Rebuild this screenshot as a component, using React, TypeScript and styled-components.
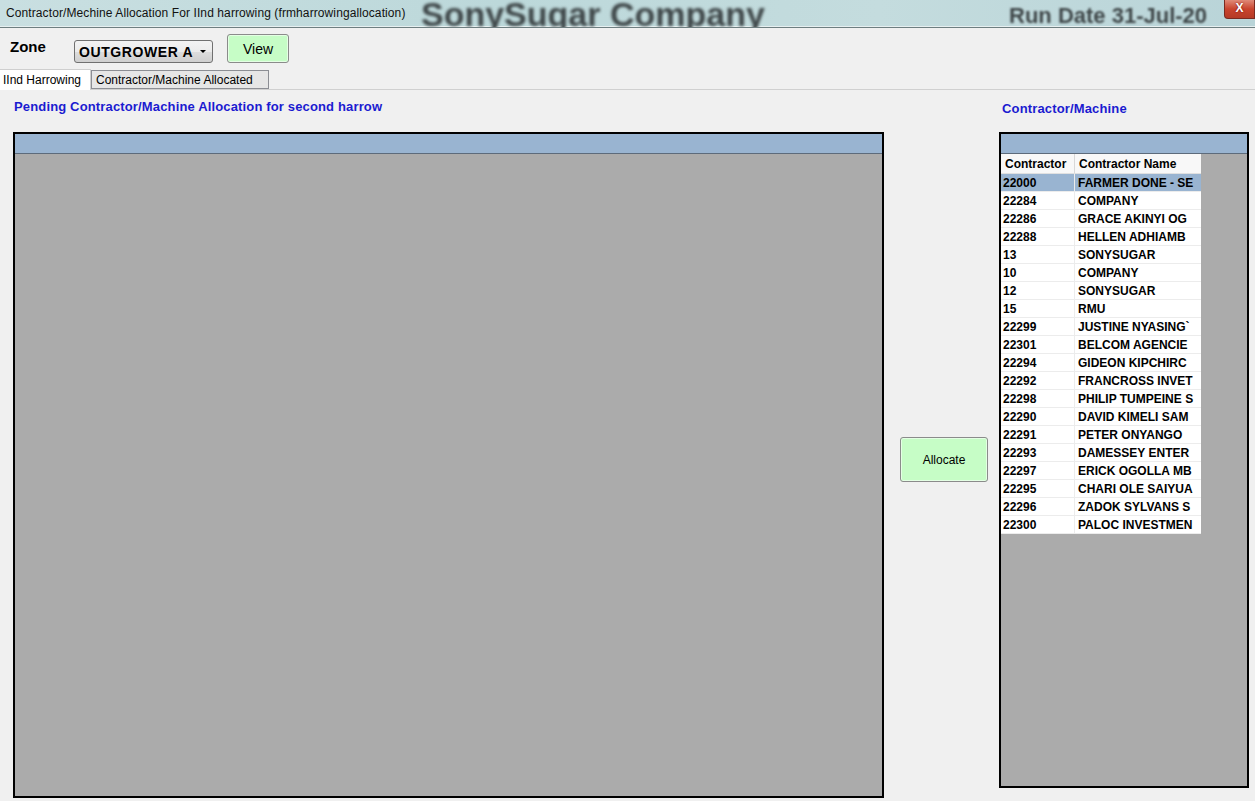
import React from "react";
import styled, { createGlobalStyle } from "styled-components";

const contractors: [string, string][] = [
  ["22000", "FARMER DONE - SE"],
  ["22284", "COMPANY"],
  ["22286", "GRACE AKINYI OG"],
  ["22288", "HELLEN ADHIAMB"],
  ["13", "SONYSUGAR"],
  ["10", "COMPANY"],
  ["12", "SONYSUGAR"],
  ["15", "RMU"],
  ["22299", "JUSTINE NYASING`"],
  ["22301", "BELCOM AGENCIE"],
  ["22294", "GIDEON KIPCHIRC"],
  ["22292", "FRANCROSS INVET"],
  ["22298", "PHILIP TUMPEINE S"],
  ["22290", "DAVID KIMELI SAM"],
  ["22291", "PETER ONYANGO"],
  ["22293", "DAMESSEY ENTER"],
  ["22297", "ERICK OGOLLA MB"],
  ["22295", "CHARI OLE SAIYUA"],
  ["22296", "ZADOK SYLVANS S"],
  ["22300", "PALOC INVESTMEN"],
];

const App: React.FC = () => {
  return (
    <Window>
      <GlobalStyle />
      <TitleBar>
        <TitleText>Contractor/Mechine Allocation For IInd harrowing (frmharrowingallocation)</TitleText>
        <CompanyName>SonySugar Company</CompanyName>
        <RunDate>Run Date 31-Jul-20</RunDate>
        <CloseButton>X</CloseButton>
      </TitleBar>

      <Toolbar>
        <ZoneLabel>Zone</ZoneLabel>
        <Dropdown>
          <DropdownText>OUTGROWER A</DropdownText>
          <DropdownArrow />
        </Dropdown>
        <GreenButton $width={62} $height={29} $size={14}>
          View
        </GreenButton>
      </Toolbar>

      <TabStrip>
        <Tab $active>IInd Harrowing</Tab>
        <Tab>Contractor/Machine Allocated</Tab>
      </TabStrip>

      <Content>
        <LeftColumn>
          <Heading $top={9} $left={1}>Pending Contractor/Machine Allocation for second harrow</Heading>
          <Grid $height={666} />
        </LeftColumn>

        <MiddleColumn>
          <GreenButton $width={88} $height={45} $size={12}>
            Allocate
          </GreenButton>
        </MiddleColumn>

        <RightColumn>
          <Heading $top={11} $left={3}>Contractor/Machine</Heading>
          <Grid $height={656}>
            <Table>
              <HeaderRow>
                <HeaderCell $width={74}>Contractor</HeaderCell>
                <HeaderCell $width={126}>Contractor Name</HeaderCell>
              </HeaderRow>
              {contractors.map(([code, name], i) => (
                <DataRow key={code + name} $selected={i === 0}>
                  <Cell $width={74} $pad={2}>{code}</Cell>
                  <Cell $width={126} $pad={3}>{name}</Cell>
                </DataRow>
              ))}
            </Table>
          </Grid>
        </RightColumn>
      </Content>
    </Window>
  );
};

export default App;

const GlobalStyle = createGlobalStyle`
  html, body {
    margin: 0;
    padding: 0;
    background: #f0f0f0;
  }
  * {
    box-sizing: border-box;
  }
`;

const Window = styled.div`
  width: 1255px;
  height: 801px;
  overflow: hidden;
  background: #f0f0f0;
  display: flex;
  flex-direction: column;
  font-family: "Liberation Sans", Arial, sans-serif;
`;

const TitleBar = styled.div`
  height: 28px;
  flex-shrink: 0;
  display: flex;
  align-items: flex-start;
  overflow: hidden;
  background: linear-gradient(90deg, #c9dfe1 0%, #bcd8da 40%, #c4dcde 70%, #b9d4d8 100%);
  border-bottom: 1px solid #6e7e80;
  box-shadow: inset 0 -1px 0 #e6eff0;
`;

const TitleText = styled.div`
  margin: 6px 0 0 6px;
  font-size: 12px;
  letter-spacing: 0.1px;
  color: #111;
  white-space: nowrap;
  width: 406px;
`;

const CompanyName = styled.div`
  margin: -5px 0 0 9px;
  font-size: 34px;
  line-height: 38px;
  font-weight: 700;
  color: #3e4648;
  white-space: nowrap;
  filter: blur(1.4px);
  width: 582px;
`;

const RunDate = styled.div`
  margin: 3px 0 0 6px;
  font-size: 22px;
  font-weight: 700;
  color: #3e4648;
  white-space: nowrap;
  filter: blur(1.3px);
  width: 212px;
  overflow: hidden;
`;

const CloseButton = styled.div`
  margin-left: auto;
  width: 31px;
  height: 19px;
  flex-shrink: 0;
  background: linear-gradient(180deg, #e08a78 0%, #c9442e 50%, #b53a25 100%);
  border: 1px solid #7a2a20;
  border-top: none;
  border-radius: 0 0 0 4px;
  color: #fff;
  font-size: 12px;
  font-weight: 700;
  text-align: center;
  line-height: 17px;
  text-shadow: 0 0 2px #600;
`;

const Toolbar = styled.div`
  height: 41px;
  flex-shrink: 0;
  display: flex;
  align-items: flex-start;
  padding: 6px 0 0 10px;
`;

const ZoneLabel = styled.div`
  width: 64px;
  margin-top: 4px;
  font-size: 15px;
  line-height: 18px;
  font-weight: 700;
  color: #000;
`;

const Dropdown = styled.div`
  width: 139px;
  height: 23px;
  margin-top: 6px;
  display: flex;
  align-items: center;
  padding: 0 6px 0 4px;
  border: 1px solid #707070;
  border-radius: 3px;
  background: linear-gradient(180deg, #f3f3f3 0%, #ebebeb 50%, #dddddd 51%, #cfcfcf 100%);
`;

const DropdownText = styled.div`
  flex: 1;
  overflow: hidden;
  white-space: nowrap;
  font-size: 14px;
  font-weight: 700;
  letter-spacing: 0.6px;
  color: #000;
`;

const DropdownArrow = styled.div`
  margin-left: 4px;
  width: 0;
  height: 0;
  border-left: 3px solid transparent;
  border-right: 3px solid transparent;
  border-top: 3px solid #000;
`;

const GreenButton = styled.div<{ $width: number; $height: number; $size: number }>`
  width: ${(p) => p.$width}px;
  height: ${(p) => p.$height}px;
  margin-left: 14px;
  display: flex;
  align-items: center;
  justify-content: center;
  background: #c6fdc6;
  border: 1px solid #8b8b8b;
  border-radius: 3px;
  box-shadow: inset 0 0 0 1px #e4ffe4;
  font-size: ${(p) => p.$size}px;
  color: #000;
`;

const TabStrip = styled.div`
  height: 21px;
  flex-shrink: 0;
  display: flex;
  align-items: flex-end;
  border-bottom: 1px solid #d0d0d0;
`;

const Tab = styled.div<{ $active?: boolean }>`
  height: ${(p) => (p.$active ? 21 : 19)}px;
  padding: 0 ${(p) => (p.$active ? 3 : 4)}px;
  margin-bottom: ${(p) => (p.$active ? -1 : 0)}px;
  display: flex;
  align-items: center;
  font-size: 12px;
  color: #000;
  white-space: nowrap;
  background: ${(p) => (p.$active ? "#ffffff" : "#e6e6e6")};
  border: 1px solid ${(p) => (p.$active ? "#cfcfcf" : "#8c8e94")};
  border-bottom: ${(p) => (p.$active ? "none" : "1px solid #8c8e94")};
  border-left: ${(p) => (p.$active ? "none" : "1px solid #8c8e94")};
  width: ${(p) => (p.$active ? 91 : 178)}px;
`;

const Content = styled.div`
  flex: 1;
  display: flex;
  padding-left: 13px;
`;

const LeftColumn = styled.div`
  width: 871px;
  display: flex;
  flex-direction: column;
`;

const RightColumn = styled.div`
  width: 250px;
  display: flex;
  flex-direction: column;
`;

const MiddleColumn = styled.div`
  width: 115px;
  padding: 347px 0 0 2px;
`;

const Heading = styled.div<{ $top: number; $left: number }>`
  height: 42px;
  padding: ${(p) => p.$top}px 0 0 ${(p) => p.$left}px;
  font-size: 13px;
  line-height: 16px;
  font-weight: 700;
  letter-spacing: 0.15px;
  color: #1b1bd0;
  white-space: nowrap;
`;

const Grid = styled.div<{ $height: number }>`
  height: ${(p) => p.$height}px;
  border: 2px solid #000;
  background: #ababab;
  overflow: hidden;

  &::before {
    content: "";
    display: block;
    height: 19px;
    background: #99b4d1;
    border-bottom: 1px solid #5d6b7b;
  }
`;

const Table = styled.div`
  width: 200px;
  display: flex;
  flex-direction: column;
`;

const HeaderRow = styled.div`
  display: flex;
  height: 20px;
  background: #f8f8f8;
  border-bottom: 1px solid #e0e0e0;
`;

const HeaderCell = styled.div<{ $width: number }>`
  width: ${(p) => p.$width}px;
  padding-left: 4px;
  display: flex;
  align-items: center;
  font-size: 12px;
  font-weight: 700;
  color: #000;
  border-right: 1px solid #d8d8d8;
  white-space: nowrap;
  overflow: hidden;

  &:last-child {
    border-right: none;
  }
`;

const DataRow = styled.div<{ $selected?: boolean }>`
  display: flex;
  height: 18px;
  background: ${(p) => (p.$selected ? "#99b4d1" : "#ffffff")};
  border-bottom: 1px solid #ececec;
`;

const Cell = styled.div<{ $width: number; $pad: number }>`
  width: ${(p) => p.$width}px;
  padding-left: ${(p) => p.$pad}px;
  display: flex;
  align-items: center;
  font-size: 12px;
  font-weight: 700;
  color: #000;
  white-space: nowrap;
  overflow: hidden;
  border-right: 1px solid #ececec;

  &:last-child {
    border-right: none;
  }
`;
